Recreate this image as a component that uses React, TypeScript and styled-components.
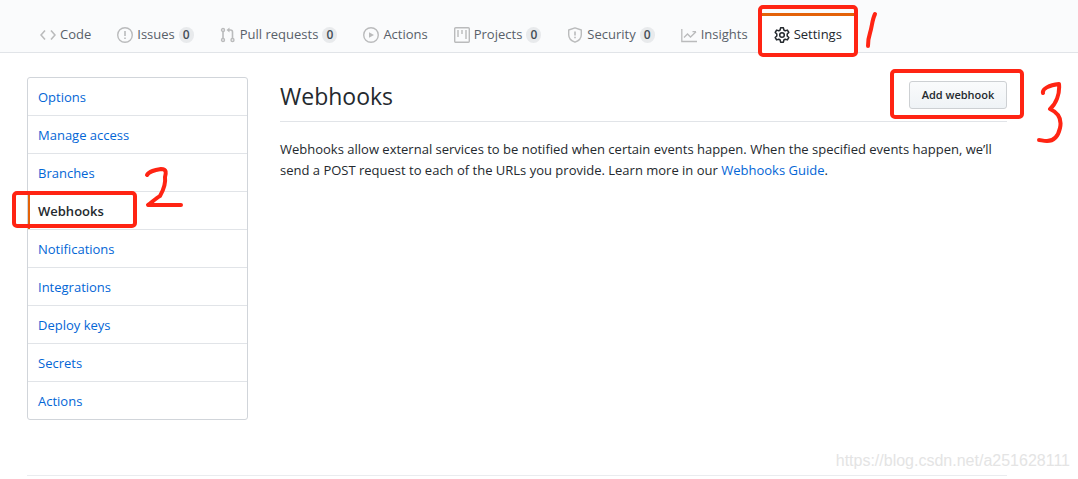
import React from "react";
import styled, { createGlobalStyle, css } from "styled-components";

const GlobalStyle = createGlobalStyle`
  *, *::before, *::after { box-sizing: border-box; }
  body {
    margin: 0;
    background: #fff;
    color: #24292e;
    font-family: "Segoe UI", "Open Sans", "Noto Sans", sans-serif;
    font-size: 13px;
    line-height: 21px;
  }
  a { color: #0366d6; text-decoration: none; }
  a:hover { text-decoration: underline; }
`;

const RED = "#ff2413";

const Page = styled.div`
  position: relative;
  overflow: hidden;
`;

const RepoHeader = styled.header`
  padding: 13px 71px 0 27px;
  background: #fafbfc;
  border-bottom: 1px solid #e1e4e8;
`;

const TabBar = styled.nav`
  display: flex;
  margin-bottom: -1px;
`;

const Tab = styled.a<{ $selected?: boolean }>`
  position: relative;
  display: flex;
  align-items: center;
  gap: 4px;
  height: 40px;
  padding: 0 13px;
  border-top: 3px solid transparent;
  white-space: nowrap;
  && { color: #586069; }
  svg { flex: none; color: #babbbc; }
  ${(p) =>
    p.$selected &&
    css`
      && { color: #24292e; }
      background: #fff;
      border-top-color: #e36209;
      svg { color: #24292e; }
    `}
`;

const Counter = styled.span`
  min-width: 15px;
  height: 16px;
  border-radius: 8px;
  background: #e8eaec;
  color: #444d56;
  font-size: 12px;
  font-weight: 600;
  line-height: 16px;
  text-align: center;
`;

const Content = styled.div`
  display: flex;
  align-items: flex-start;
  gap: 32px;
  padding: 24px 71px 0 27px;
`;

const Menu = styled.nav`
  flex: none;
  width: 221px;
  border: 1px solid #d1d5da;
  border-radius: 3px;
`;

const MenuItem = styled.a<{ $selected?: boolean }>`
  position: relative;
  display: block;
  padding: 9px 10px 7px;
  border-bottom: 1px solid #e1e4e8;
  &:last-child { border-bottom: 0; }
  ${(p) =>
    p.$selected &&
    css`
      && { color: #24292e; }
      font-weight: 600;
      box-shadow: inset 2px 0 0 #e36209;
    `}
`;

const Main = styled.main`
  flex: 1;
  min-width: 0;
`;

const Subhead = styled.div`
  display: flex;
  align-items: center;
  justify-content: space-between;
  height: 45px;
  margin-bottom: 17px;
  padding-bottom: 8px;
  border-bottom: 1px solid #e1e4e8;
`;

const Title = styled.h2`
  margin: 0;
  padding-top: 2px;
  font-size: 23px;
  font-weight: 400;
  line-height: 36px;
`;

const ButtonSlot = styled.div`
  position: relative;
`;

const Button = styled.button`
  display: block;
  min-width: 98px;
  height: 28px;
  padding: 0 10px;
  border: 1px solid #cdd0d3;
  border-radius: 3px;
  background: linear-gradient(#fafbfc, #eff3f6);
  color: #24292e;
  font: 600 11px/20px "Segoe UI", "Open Sans", "Noto Sans", sans-serif;
  cursor: pointer;
`;

const Intro = styled.p`
  margin: 0;
`;

const Footer = styled.footer`
  height: 4px;
  margin: 55px 71px 0 27px;
  border-top: 1px solid #eaecef;
`;

const Watermark = styled.span`
  position: absolute;
  right: 8px;
  bottom: 8px;
  color: #e4e4e4;
  font: 16px/20px "Liberation Sans", Arial, sans-serif;
`;

const Outline = styled.span<{ $inset: string }>`
  position: absolute;
  inset: ${(p) => p.$inset};
  border: 4px solid ${RED};
  border-radius: 5px;
  pointer-events: none;
`;

const Digit = styled.svg<{ $left: number; $top: number }>`
  position: absolute;
  left: ${(p) => p.$left}px;
  top: ${(p) => p.$top}px;
  fill: none;
  stroke: ${RED};
  stroke-width: 4;
  stroke-linecap: round;
  stroke-linejoin: round;
  pointer-events: none;
`;

const Icon = ({ children }: { children: React.ReactNode }) => (
  <svg width="16" height="16" viewBox="0 0 16 16" fill="none" stroke="currentColor" strokeWidth="1.4" aria-hidden="true">
    {children}
  </svg>
);

const icons = {
  code: <path d="M5 3.5 1 8l4 4.500M11 3.500 15 8l-4 4.500" strokeWidth="1.6" />,
  issues: (
    <>
      <circle cx="8" cy="8" r="7.3" />
      <path d="M8 4v5M8 10.400V12" strokeWidth="1.6" />
    </>
  ),
  pulls: (
    <>
      <circle cx="3" cy="3" r="1.500" />
      <circle cx="3" cy="13" r="1.500" />
      <circle cx="12.500" cy="13" r="1.500" />
      <path d="M3 4.600v6.800M8 3h2.500q2 0 2 2v6.400" strokeWidth="1.6" />
      <path d="M6.500 3 9.500.5v5z" fill="currentColor" stroke="none" />
    </>
  ),
  actions: (
    <>
      <circle cx="8" cy="8" r="7.3" />
      <path d="M6 5.200v5.600L11 8z" fill="currentColor" stroke="none" />
    </>
  ),
  projects: (
    <>
      <rect x=".7" y=".7" width="14.6" height="14.6" rx="1" />
      <path d="M4 3v7M8 3v4M12 3v9" />
    </>
  ),
  security: (
    <>
      <path d="M8 .9 14.300 3v4.700c0 3.500-2.500 6.100-6.300 7.500-3.800-1.400-6.300-4-6.300-7.500V3z" strokeLinejoin="round" />
      <path d="M8 4.500v4M8 9.800v1.500" strokeWidth="1.6" />
    </>
  ),
  insights: <path d="M.8 2v12.500H16M3 10.500l3.500-3.500 3 3L15 4.700M11.500 4.700H15" strokeWidth="1.3" />,
  settings: (
    <>
      <path
        d="M6.600.8h2.800l.5 2.200 1.300.8 2.200-.7 1.400 2.400L13.200 7v2l1.600 1.500-1.400 2.400-2.200-.7-1.300.8-.5 2.200H6.600L6.100 13l-1.300-.8-2.200.7-1.400-2.400L2.800 9V7L1.200 5.500l1.400-2.400 2.200.7L6.100 3z"
        strokeLinejoin="round"
        strokeWidth="1.5"
      />
      <circle cx="8" cy="8" r="2.300" strokeWidth="1.5" />
    </>
  ),
};

const tabs: { label: string; icon: keyof typeof icons; count?: number; selected?: boolean }[] = [
  { label: "Code", icon: "code" },
  { label: "Issues", icon: "issues", count: 0 },
  { label: "Pull requests", icon: "pulls", count: 0 },
  { label: "Actions", icon: "actions" },
  { label: "Projects", icon: "projects", count: 0 },
  { label: "Security", icon: "security", count: 0 },
  { label: "Insights", icon: "insights" },
  { label: "Settings", icon: "settings", selected: true },
];

const menu = [
  "Options",
  "Manage access",
  "Branches",
  "Webhooks",
  "Notifications",
  "Integrations",
  "Deploy keys",
  "Secrets",
  "Actions",
];

export default function App() {
  return (
    <Page>
      <GlobalStyle />
      <RepoHeader>
        <TabBar aria-label="Repository">
          {tabs.map((t) => (
            <Tab key={t.label} href="#" $selected={t.selected}>
              <Icon>{icons[t.icon]}</Icon>
              <span>{t.label}</span>
              {t.count !== undefined && <Counter>{t.count}</Counter>}
              {t.selected && (
                <>
                  <Outline $inset="-11px -3px -4px -3px" />
                  <Digit $left={102} $top={-5} width="16" height="40" aria-hidden="true">
                    <path stroke={RED} d="M12 3C9 9 9 16 7 22 5 28 5 31 5 35" />
                  </Digit>
                </>
              )}
            </Tab>
          ))}
        </TabBar>
      </RepoHeader>
      <Content>
        <Menu aria-label="Settings">
          {menu.map((label) => {
            const selected = label === "Webhooks";
            return (
              <MenuItem key={label} href="#" $selected={selected}>
                {label}
                {selected && (
                  <>
                    <Outline $inset="-1px 110px 1px -16px" />
                    <Digit $left={115} $top={-26} width="42" height="44" aria-hidden="true">
                      <path d="M4 9C6 5 12 4 18 3 24 3 23 7 22 11 23 18 21 23 17 30 13 32 8 37 5 39H38" />
                    </Digit>
                  </>
                )}
              </MenuItem>
            );
          })}
        </Menu>
        <Main>
          <Subhead>
            <Title>Webhooks</Title>
            <ButtonSlot>
              <Button type="button">Add webhook</Button>
              <Outline $inset="-12px -17px -10px -19px" />
              <Digit $left={126} $top={-1} width="30" height="66" aria-hidden="true">
                <path d="M8 13C7 9 14 5 24 4 25 14 21 24 15 29 24 33 27 39 25 48 23 57 18 61 12 61 8 61 6 60 4 60" />
              </Digit>
            </ButtonSlot>
          </Subhead>
          <Intro>
            Webhooks allow external services to be notified when certain events happen. When the specified events
            happen, we’ll send a POST request to each of the URLs you provide. Learn more in our{" "}
            <a href="#">Webhooks Guide</a>.
          </Intro>
        </Main>
      </Content>
      <Footer />
      <Watermark>https://blog.csdn.net/a251628111</Watermark>
    </Page>
  );
}
